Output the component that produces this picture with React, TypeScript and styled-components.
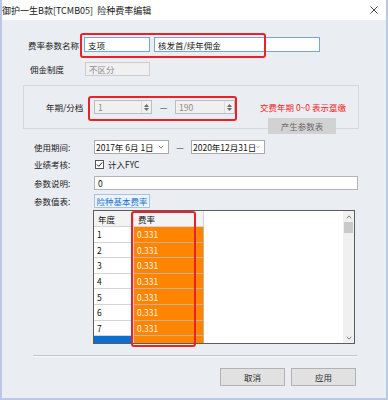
import React from "react";
import styled, { createGlobalStyle } from "styled-components";

const GlobalStyle = createGlobalStyle`
  html, body {
    margin: 0;
    padding: 0;
    background: #ffffff;
  }
  body {
    font-family: "Noto Sans CJK SC", "Noto Sans", sans-serif;
    font-size: 8.5px;
    color: #1a1a1a;
  }
`;

const Window = styled.div`
  position: relative;
  width: 388px;
  height: 400px;
  box-sizing: border-box;
  background: #eaedf1;
  border-left: 2px solid #b9c8e4;
  border-right: 2px solid #b9c8e4;
  border-bottom: 2px solid #b9c8e4;
  display: flex;
  flex-direction: column;
  overflow: hidden;
`;

const TitleBar = styled.div`
  height: 20px;
  margin: 0 -2px;
  padding: 0 10px 0 2px;
  background: #ffffff;
  display: flex;
  align-items: center;
  justify-content: space-between;
  font-size: 9px;
  color: #202020;
  white-space: pre;
`;

const Row = styled.div<{ $mt: number; $h: number; $ml?: number }>`
  position: relative;
  display: flex;
  align-items: center;
  height: ${(p) => p.$h}px;
  margin-top: ${(p) => p.$mt}px;
  margin-left: ${(p) => p.$ml ?? 0}px;
`;

const Label = styled.span<{ $ml: number; $w: number }>`
  margin-left: ${(p) => p.$ml}px;
  width: ${(p) => p.$w}px;
  flex: none;
  color: #222;
  white-space: nowrap;
`;

const TextBox = styled.div<{ $w: number; $focus?: boolean; $disabled?: boolean }>`
  box-sizing: border-box;
  width: ${(p) => p.$w}px;
  height: 100%;
  flex: none;
  display: flex;
  align-items: center;
  padding-left: 3px;
  background: ${(p) => (p.$disabled ? "#f0f0f0" : "#ffffff")};
  border: 1px solid
    ${(p) => (p.$focus ? "#6ea8de" : p.$disabled ? "#cccccc" : "#b4b4b4")};
  color: ${(p) => (p.$disabled ? "#8c8c8c" : "#111")};
  white-space: pre;
`;

const Spin = styled(TextBox)`
  justify-content: space-between;
  padding-right: 0;
  border-color: #bdbdbd;
`;

const SpinArrows = styled.div`
  width: 9px;
  height: 100%;
  display: flex;
  flex-direction: column;
  align-items: center;
  justify-content: center;
  gap: 1px;
  border-left: 1px solid #dcdcdc;
`;

const DateBox = styled(TextBox)`
  justify-content: space-between;
  padding-right: 4px;
  border-color: #a9a9a9;
  padding-left: 1px;
`;

const Dash = styled.span<{ $w: number }>`
  width: ${(p) => p.$w}px;
  flex: none;
  text-align: center;
  color: #333;
`;

const RedMark = styled.div<{ $l: number; $t: number; $w: number; $h: number }>`
  position: absolute;
  left: ${(p) => p.$l}px;
  top: ${(p) => p.$t}px;
  width: ${(p) => p.$w}px;
  height: ${(p) => p.$h}px;
  box-sizing: border-box;
  border: 2px solid #ec2127;
  border-radius: 3px;
  pointer-events: none;
`;

const Group = styled.div`
  position: relative;
  box-sizing: border-box;
  margin-top: 9px;
  margin-left: 21px;
  width: 336px;
  height: 44px;
  border: 1px solid #d6d9de;
  display: flex;
  flex-direction: column;
`;

const Hint = styled.span`
  margin-left: 25px;
  color: #f21d1d;
  white-space: nowrap;
`;

const GrayButton = styled.div`
  align-self: flex-end;
  margin-right: 22px;
  margin-top: 4px;
  width: 68px;
  height: 16px;
  flex: none;
  background: #d2d2d2;
  color: #6a6a6a;
  display: flex;
  align-items: center;
  justify-content: center;
`;

const CheckBox = styled.span`
  box-sizing: border-box;
  width: 9px;
  height: 9px;
  margin-right: 4px;
  border: 1px solid #555;
  background: #fff;
  display: flex;
  align-items: center;
  justify-content: center;
`;

const Tab = styled.div`
  box-sizing: border-box;
  width: 56px;
  height: 100%;
  border: 1px solid #a9c2de;
  background: #eef4fb;
  color: #1a74d2;
  display: flex;
  align-items: center;
  justify-content: center;
`;

const Grid = styled.div`
  position: relative;
  box-sizing: border-box;
  margin-top: 2px;
  margin-left: 91px;
  width: 262px;
  height: 134px;
  border: 1px solid #5c5c5c;
  background: #ffffff;
  display: flex;
`;

const Columns = styled.div`
  display: flex;
  flex-direction: column;
  overflow: hidden;
`;

const GridRow = styled.div<{ $h: number }>`
  display: flex;
  height: ${(p) => p.$h}px;
  flex: none;
`;

const Cell = styled.div<{ $w: number; $kind: "head" | "year" | "rate" | "sel" }>`
  box-sizing: border-box;
  width: ${(p) => p.$w}px;
  height: 100%;
  display: flex;
  align-items: center;
  padding-left: ${(p) => (p.$kind === "head" ? 4 : 3)}px;
  background: ${(p) =>
    p.$kind === "head"
      ? "#f3f3f3"
      : p.$kind === "rate"
      ? "#ff8500"
      : p.$kind === "sel"
      ? "#0b6fd0"
      : "#ffffff"};
  color: ${(p) => (p.$kind === "rate" || p.$kind === "sel" ? "#fff5e8" : "#111")};
  border-right: 1px solid ${(p) => (p.$kind === "rate" ? "#c7b295" : "#d4d4d4")};
  border-bottom: 1px solid ${(p) => (p.$kind === "rate" ? "#c7b295" : "#d4d4d4")};
`;

const Filler = styled.div`
  flex: 1;
`;

const ScrollBar = styled.div`
  width: 11px;
  height: 100%;
  background: #f0f0f0;
  display: flex;
  flex-direction: column;
  align-items: center;
`;

const ScrollArrow = styled.div`
  height: 11px;
  display: flex;
  align-items: center;
  justify-content: center;
`;

const Thumb = styled.div`
  width: 9px;
  height: 11px;
  background: #c9c9c9;
`;

const Divider = styled.div`
  margin-top: 11px;
  margin-left: 31px;
  width: 324px;
  height: 0;
  border-top: 1px solid #c3c6cb;
  border-bottom: 1px solid #f7f8fa;
`;

const Footer = styled.div`
  display: flex;
  gap: 6px;
  margin-top: 11px;
  margin-left: 218px;
  height: 18px;
`;

const DialogButton = styled.div`
  box-sizing: border-box;
  width: 65px;
  height: 100%;
  background: #e1e1e1;
  border: 1px solid #b3b3b3;
  color: #2a2a2a;
  display: flex;
  align-items: center;
  justify-content: center;
`;

const Chevron = ({ up = false, size = 6 }: { up?: boolean; size?: number }) => (
  <svg width={size} height={size / 2 + 1} viewBox="0 0 8 5">
    <polyline
      points={up ? "1,4.2 4,1 7,4.2" : "1,0.8 4,4 7,0.8"}
      fill="none"
      stroke="#555"
      strokeWidth="1"
    />
  </svg>
);

const SpinCtl = () => (
  <SpinArrows>
    <svg width="5" height="3" viewBox="0 0 5 3">
      <polygon points="0,3 2.5,0 5,3" fill="#6b6b6b" />
    </svg>
    <svg width="5" height="3" viewBox="0 0 5 3">
      <polygon points="0,0 2.5,3 5,0" fill="#6b6b6b" />
    </svg>
  </SpinArrows>
);

const rows = [1, 2, 3, 4, 5, 6, 7];

export default function App() {
  return (
    <>
      <GlobalStyle />
      <Window>
        <TitleBar>
          <span>御护一生B款[TCMB05]  险种费率编辑</span>
          <svg width="8" height="8" viewBox="0 0 8 8">
            <path d="M0.5 0.5 L7.5 7.5 M7.5 0.5 L0.5 7.5" stroke="#333" strokeWidth="0.9" />
          </svg>
        </TitleBar>

        <Row $mt={17} $h={15}>
          <Label $ml={26} $w={56}>费率参数名称</Label>
          <TextBox $w={66} $focus>支项</TextBox>
          <TextBox $w={166} $focus style={{ marginLeft: 4 }}>
            核发首/续年佣金
          </TextBox>
          <RedMark $l={78} $t={-4} $w={186} $h={25} />
        </Row>

        <Row $mt={10} $h={14}>
          <Label $ml={28} $w={55}>佣金制度</Label>
          <TextBox $w={65} $disabled>不区分</TextBox>
        </Row>

        <Group>
          <Row $mt={14} $h={15}>
            <Label $ml={22} $w={48}>年期/分档</Label>
            <Spin $w={58} $disabled>
              1
              <SpinCtl />
            </Spin>
            <Dash $w={23}>—</Dash>
            <Spin $w={60} $disabled>
              190
              <SpinCtl />
            </Spin>
            <Hint>交费年期 0~0 表示趸缴</Hint>
          </Row>
          <GrayButton>产生参数表</GrayButton>
          <RedMark $l={64} $t={10} $w={149} $h={25} />
        </Group>

        <Row $mt={11} $h={14}>
          <Label $ml={32} $w={60}>使用期间:</Label>
          <DateBox $w={75}>
            2017年 6月 1日
            <Chevron />
          </DateBox>
          <Dash $w={22}>—</Dash>
          <DateBox $w={74}>
            2020年12月31日
            <Chevron />
          </DateBox>
        </Row>

        <Row $mt={5} $h={10}>
          <Label $ml={32} $w={61}>业绩考核:</Label>
          <CheckBox>
            <svg width="7" height="7" viewBox="0 0 7 7">
              <polyline points="1,3.6 2.8,5.4 6.2,1.4" fill="none" stroke="#222" strokeWidth="1" />
            </svg>
          </CheckBox>
          <span>计入FYC</span>
        </Row>

        <Row $mt={7} $h={14}>
          <Label $ml={32} $w={60}>参数说明:</Label>
          <TextBox $w={264}>0</TextBox>
        </Row>

        <Row $mt={4} $h={14}>
          <Label $ml={32} $w={60}>参数值表:</Label>
          <Tab>险种基本费率</Tab>
        </Row>

        <Grid>
          <Columns>
            <GridRow $h={16}>
              <Cell $w={40} $kind="head">年度</Cell>
              <Cell $w={70} $kind="head">费率</Cell>
            </GridRow>
            {rows.map((r) => (
              <GridRow key={r} $h={15.6}>
                <Cell $w={40} $kind="year">{r}</Cell>
                <Cell $w={70} $kind="rate">0.331</Cell>
              </GridRow>
            ))}
            <GridRow $h={15.6}>
              <Cell $w={40} $kind="sel" />
              <Cell $w={70} $kind="rate" />
            </GridRow>
          </Columns>
          <Filler />
          <ScrollBar>
            <ScrollArrow>
              <Chevron up />
            </ScrollArrow>
            <Thumb />
            <Filler />
            <ScrollArrow>
              <Chevron />
            </ScrollArrow>
          </ScrollBar>
          <RedMark $l={37} $t={0} $w={65} $h={136} />
        </Grid>

        <Divider />

        <Footer>
          <DialogButton>取消</DialogButton>
          <DialogButton>应用</DialogButton>
        </Footer>
      </Window>
    </>
  );
}
